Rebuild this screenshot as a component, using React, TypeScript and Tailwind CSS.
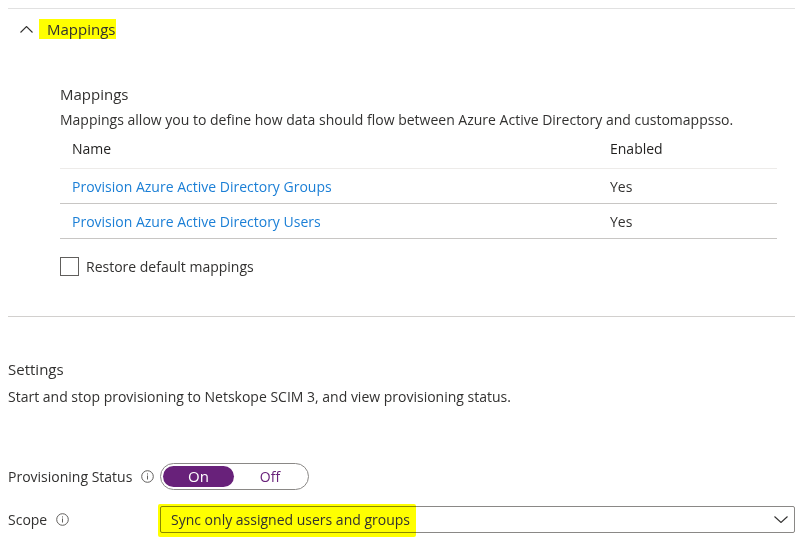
const font = { fontFamily: '"Open Sans", "Noto Sans", sans-serif' };

function InfoIcon() {
  return (
    <svg width="13" height="13" viewBox="0 0 13 13" className="shrink-0">
      <circle cx="6.5" cy="6.5" r="5.8" fill="none" stroke="#605e5c" strokeWidth="1" />
      <rect x="6" y="5.5" width="1" height="4" fill="#605e5c" />
      <rect x="6" y="3.4" width="1" height="1.1" fill="#605e5c" />
    </svg>
  );
}

function Chevron({ up, w, h }: { up?: boolean; w: number; h: number }) {
  return (
    <svg width={w} height={h} viewBox={`0 0 ${w} ${h}`} className="shrink-0">
      <polyline
        points={up ? `0.5,${h - 0.5} ${w / 2},0.5 ${w - 0.5},${h - 0.5}` : `0.5,0.5 ${w / 2},${h - 0.5} ${w - 0.5},0.5`}
        fill="none"
        stroke="#323130"
        strokeWidth="1.1"
      />
    </svg>
  );
}

const rows = [
  { name: 'Provision Azure Active Directory Groups', enabled: 'Yes' },
  { name: 'Provision Azure Active Directory Users', enabled: 'Yes' },
];

export default function App() {
  return (
    <div
      className="w-[801px] h-[544px] overflow-hidden bg-white text-[#323130] text-[14px]"
      style={font}
    >
      <div className="pt-2 pl-2 pr-[6px]">
        <div className="h-px bg-[#e1e1e1]" />
      </div>

      {/* collapsible header */}
      <div className="flex items-center h-[20px] mt-[10px] pl-[20px]">
        <Chevron up w={13} h={7} />
        <span className="ml-[6px] pl-[8px] pr-[1px] h-[20px] leading-[20px] bg-[#ffff00] text-[15px]">
          Mappings
        </span>
      </div>

      <div className="pl-[60px] pr-[24px]">
        <div className="mt-[45px] text-[15px] leading-[20px]">Mappings</div>
        <div className="mt-[6px] leading-[20px]">
          Mappings allow you to define how data should flow between Azure Active Directory and
          customappsso.
        </div>

        <div className="mt-[2px]">
          <div className="flex items-center h-[37px] pb-[3px] border-b border-[#edebe9] text-[#201f1e]">
            <div className="pl-[12px] w-[538px]">Name</div>
            <div className="pl-[12px]">Enabled</div>
          </div>
          {rows.map((r) => (
            <div key={r.name} className="flex items-center h-[35px] border-b border-[#c8c6c4]">
              <div className="pl-[12px] w-[538px] text-[#1b7fd6]">{r.name}</div>
              <div className="pl-[12px]">{r.enabled}</div>
            </div>
          ))}
        </div>

        <label className="flex items-center mt-[17px] h-[20px]">
          <span className="w-[19px] h-[19px] border border-[#605e5c] bg-white" />
          <span className="ml-[7px]">Restore default mappings</span>
        </label>
      </div>

      <div className="pl-2 pr-[6px] mt-[40px]">
        <div className="h-px bg-[#d2d0ce]" />
      </div>

      <div className="pl-2 pr-[6px]">
        <div className="mt-[42px] text-[15px] leading-[20px]">Settings</div>
        <div className="mt-[8px] leading-[20px]">
          Start and stop provisioning to Netskope SCIM 3, and view provisioning status.
        </div>

        <div className="flex items-center mt-[56px] h-[27px]">
          <div className="flex items-center w-[152px]">
            <span>Provisioning Status</span>
            <span className="ml-[9px]">
              <InfoIcon />
            </span>
          </div>
          <div className="flex items-center w-[149px] h-[27px] rounded-full border border-[#8a8886] p-[2px]">
            <div className="w-[71px] h-[21px] rounded-full bg-[#68217a] text-white text-[15px] flex items-center justify-center">
              On
            </div>
            <div className="flex-1 flex items-center justify-center text-[#68217a]">Off</div>
          </div>
        </div>

        <div className="flex items-center mt-[16px] h-[27px]">
          <div className="flex items-center w-[152px]">
            <span>Scope</span>
            <span className="ml-[9px]">
              <InfoIcon />
            </span>
          </div>
          <div className="relative flex-1 flex items-center h-[27px] border border-[#8a8886] rounded-[2px] pl-[10px] pr-[6px]">
            <span className="relative z-10">Sync only assigned users and groups</span>
            <span className="absolute -left-[3px] -top-[3px] w-[258px] h-[33px] bg-[#ffff00] mix-blend-multiply rounded-[2px]" />
            <span className="ml-auto">
              <Chevron w={14} h={7} />
            </span>
          </div>
        </div>
      </div>
    </div>
  );
}
